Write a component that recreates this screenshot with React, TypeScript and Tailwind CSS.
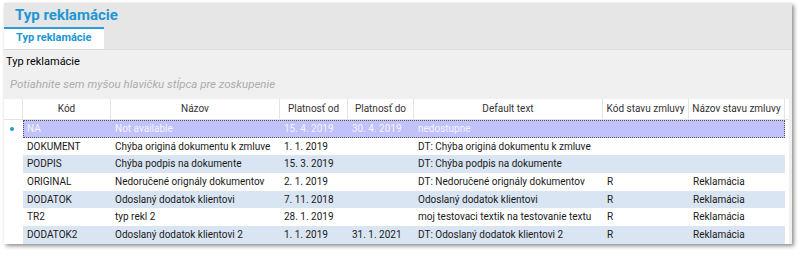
import React from "react";

type Row = {
  kod: string;
  nazov: string;
  od: string;
  do: string;
  text: string;
  kodStavu: string;
  nazovStavu: string;
};

const rows: Row[] = [
  { kod: "NA", nazov: "Not available", od: "15. 4. 2019", do: "30. 4. 2019", text: "nedostupne", kodStavu: "", nazovStavu: "" },
  { kod: "DOKUMENT", nazov: "Chýba originá dokumentu k zmluve", od: "1. 1. 2019", do: "", text: "DT: Chýba originá dokumentu k zmluve", kodStavu: "", nazovStavu: "" },
  { kod: "PODPIS", nazov: "Chýba podpis na dokumente", od: "15. 3. 2019", do: "", text: "DT: Chýba podpis na dokumente", kodStavu: "", nazovStavu: "" },
  { kod: "ORIGINAL", nazov: "Nedoručené orignály dokumentov", od: "2. 1. 2019", do: "", text: "DT: Nedoručené orignály dokumentov", kodStavu: "R", nazovStavu: "Reklamácia" },
  { kod: "DODATOK", nazov: "Odoslaný dodatok klientovi", od: "7. 11. 2018", do: "", text: "Odoslaný dodatok klientovi", kodStavu: "R", nazovStavu: "Reklamácia" },
  { kod: "TR2", nazov: "typ rekl 2", od: "28. 1. 2019", do: "", text: "moj testovaci textik na testovanie textu", kodStavu: "R", nazovStavu: "Reklamácia" },
  { kod: "DODATOK2", nazov: "Odoslaný dodatok klientovi 2", od: "1. 1. 2019", do: "31. 1. 2021", text: "DT: Odoslaný dodatok klientovi 2", kodStavu: "R", nazovStavu: "Reklamácia" },
];

const headers = ["Kód", "Názov", "Platnosť od", "Platnosť do", "Default text", "Kód stavu zmluvy", "Názov stavu zmluvy"];

const cols = "grid grid-cols-[19px_88px_169px_68px_66px_189px_86px_96px]";

export default function App() {
  return (
    <div className="w-[800px] h-[255px] bg-white pt-[3px] pl-[4px] text-[10px] text-[#1a1a1a]" style={{ fontFamily: 'Roboto, "Segoe UI", sans-serif' }}>
      <div className="w-[788px] h-[241px] bg-[#f0f0f0] flex flex-col shadow-[2px_2px_4px_rgba(0,0,0,0.45)] overflow-hidden">
        {/* title bar + tab strip */}
        <div className="bg-[#e6e6e6] h-[47px] flex flex-col border-b border-[#dcdcdc]">
          <div className="h-[25px] pl-[11px] pt-[1px] text-[15px] font-bold leading-[22px] text-[#2196d3] whitespace-nowrap">Typ reklamácie</div>
          <div className="flex">
            <div className="w-[100px] h-[22px] bg-white border-t-2 border-[#2a9fd8] pl-[12px] text-[11px] font-bold leading-[18px] text-[#2196d3] whitespace-nowrap">
              Typ reklamácie
            </div>
          </div>
        </div>
        <div className="pl-[2px] pt-[5px] h-[20px] leading-[14px] text-[11px] text-black">Typ reklamácie</div>
        <div className="pl-[6px] h-[29px] pt-[6px] italic text-[11.5px] text-[#acacac] leading-[16px] whitespace-nowrap">
          Potiahnite sem myšou hlavičku stĺpca pre zoskupenie
        </div>
        {/* grid */}
        <div className="flex-1 bg-white mr-[3px]">
          <div className={`${cols} h-[21px] border-b border-[#e4e4e4]`}>
            <div className="border-r border-[#e4e4e4]" />
            {headers.map((h) => (
              <div key={h} className="border-r border-[#e4e4e4] text-center leading-[20px] text-[#333] whitespace-nowrap overflow-hidden">
                {h}
              </div>
            ))}
          </div>
          {rows.map((r, i) => {
            const selected = i === 0;
            const alt = i % 2 === 0 && !selected;
            const cells = [r.kod, r.nazov, r.od, r.do, r.text, r.kodStavu, r.nazovStavu];
            return (
              <div key={r.kod} className={`${cols} h-[17.7px] leading-[17px]`}>
                <div className="flex items-center justify-center">
                  {selected && <div className="w-[4px] h-[4px] rounded-full bg-[#1e9ad6] ml-[-4px]" />}
                </div>
                <div
                  className={`col-span-7 grid grid-cols-[88px_169px_68px_66px_189px_86px_96px] ${
                    selected
                      ? "bg-[#c2c2fa] text-[#f4f4ff] outline-1 outline-dotted outline-[#555] -outline-offset-1"
                      : alt
                        ? "bg-[#d9e5f3]"
                        : "bg-white"
                  }`}
                >
                  {cells.map((c, j) => (
                    <div key={j} className="pl-[4px] whitespace-nowrap overflow-hidden">
                      {c}
                    </div>
                  ))}
                </div>
              </div>
            );
          })}
        </div>
      </div>
    </div>
  );
}
